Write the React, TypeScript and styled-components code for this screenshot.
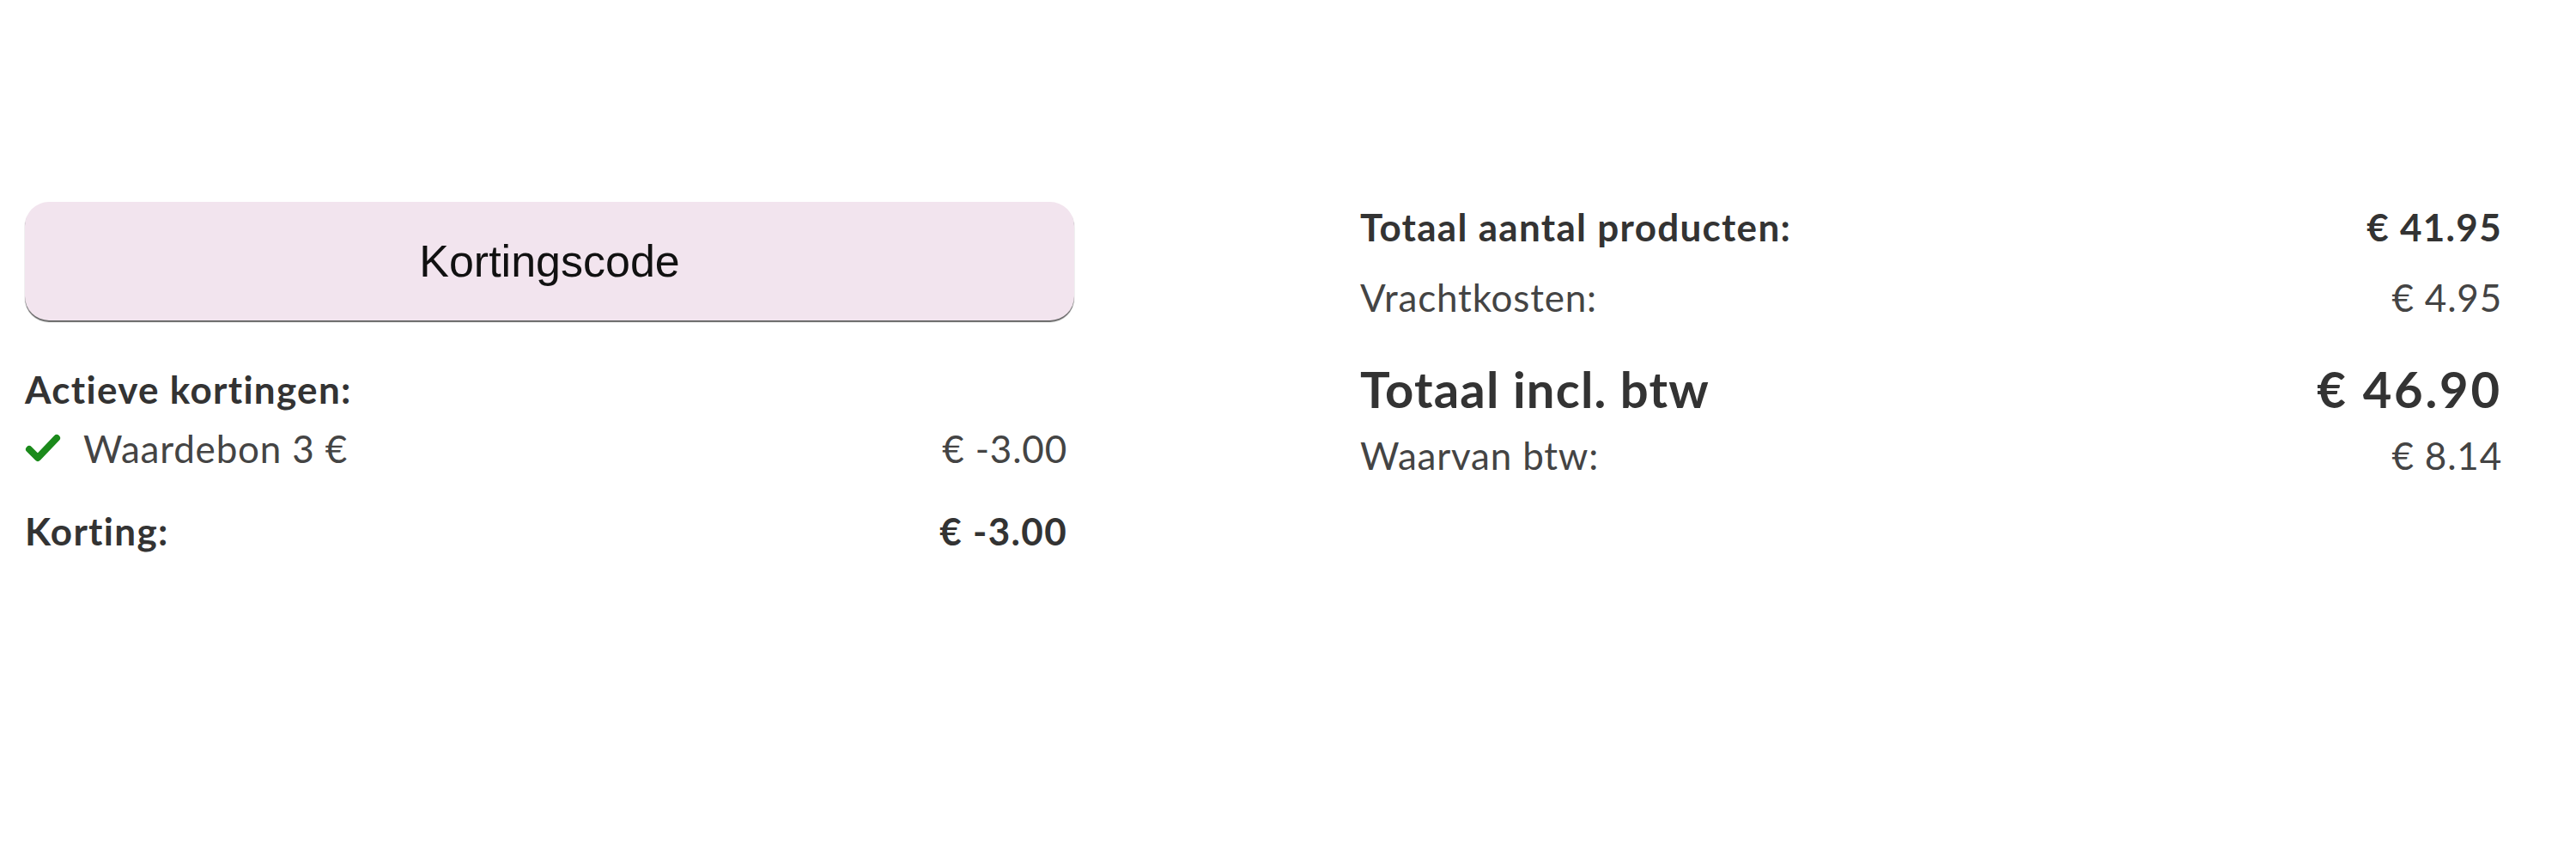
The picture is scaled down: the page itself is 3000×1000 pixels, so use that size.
import styled, { createGlobalStyle } from "styled-components";

const GlobalStyle = createGlobalStyle`
  html, body {
    margin: 0;
    padding: 0;
    background: #ffffff;
  }
  body {
    font-family: "Lato", "Open Sans", sans-serif;
    color: #333333;
  }
`

const discounts = [{ label: "Waardebon 3 €", amount: "€ -3.00" }];

function CheckIcon() {
  return (
    <svg width="42" height="34" viewBox="0 0 42 34">
      <polyline
        points="5,18 15,28 37,5"
        fill="none"
        stroke="#1b8a1b"
        strokeWidth="8"
        strokeLinecap="round"
        strokeLinejoin="round"
      />
    </svg>
  );
}

export default function App() {
  return (
    <>
      <GlobalStyle />
      <Page>
        <LeftColumn>
          <CouponButton type="button">Kortingscode</CouponButton>
          <DiscountList>
            <SectionTitle>Actieve kortingen:</SectionTitle>
            {discounts.map((d) => (
              <Row key={d.label} $top={13}>
                <DiscountLabel>
                  <CheckIcon />
                  <span>{d.label}</span>
                </DiscountLabel>
                <Amount>{d.amount}</Amount>
              </Row>
            ))}
            <Row $bold $top={40}>
              <Label>Korting:</Label>
              <Amount>€ -3.00</Amount>
            </Row>
          </DiscountList>
        </LeftColumn>

        <RightColumn>
          <Row $bold>
            <Label>Totaal aantal producten:</Label>
            <Amount>€ 41.95</Amount>
          </Row>
          <Row $top={26}>
            <Label>Vrachtkosten:</Label>
            <Amount>€ 4.95</Amount>
          </Row>
          <GrandTotal>
            <Label>Totaal incl. btw</Label>
            <BigAmount>€ 46.90</BigAmount>
          </GrandTotal>
          <Row $top={14}>
            <Label>Waarvan btw:</Label>
            <Amount>€ 8.14</Amount>
          </Row>
        </RightColumn>
      </Page>
    </>
  );
}

const Page = styled.div`
  display: flex;
  align-items: flex-start;
  gap: 333px;
  padding: 235px 0 0 29px;
`

const LeftColumn = styled.div`
  width: 1222px;
  display: flex;
  flex-direction: column;
`

const DiscountList = styled.div`
  display: flex;
  flex-direction: column;
  padding-right: 8px;
  margin-top: 52px;
`

const RightColumn = styled.div`
  width: 1330px;
  display: flex;
  flex-direction: column;
  padding-top: 1px;
`

const CouponButton = styled.button`
  height: 138px;
  width: 100%;
  border: none;
  border-radius: 28px;
  background-color: #f2e4ee;
  box-shadow: 0 2px 1px rgba(0, 0, 0, 0.6);
  font-family: "Liberation Sans", Arial, sans-serif;
  font-size: 52px;
  color: #111111;
  cursor: pointer;
`

const SectionTitle = styled.div`
  font-size: 44px;
  line-height: 56px;
  font-weight: 700;
  letter-spacing: 1.3px;
  color: #333333;
`

const Row = styled.div<{ $bold?: boolean; $top?: number }>`
  display: flex;
  justify-content: space-between;
  align-items: center;
  margin-top: ${(p) => p.$top ?? 0}px;
  font-size: 44px;
  line-height: 56px;
  font-weight: ${(p) => (p.$bold ? 700 : 400)};
  letter-spacing: ${(p) => (p.$bold ? "1.3px" : "0.8px")};
  color: ${(p) => (p.$bold ? "#333333" : "#444444")};
`

const DiscountLabel = styled.div`
  display: flex;
  align-items: center;
  gap: 26px;
`

const GrandTotal = styled(Row)`
  margin-top: 44px;
  font-size: 58px;
  line-height: 70px;
  font-weight: 700;
  letter-spacing: 1.2px;
  color: #333333;
`

const Label = styled.span``

const Amount = styled.span`
  text-align: right;
`

const BigAmount = styled(Amount)`
  letter-spacing: 2.8px;
`
